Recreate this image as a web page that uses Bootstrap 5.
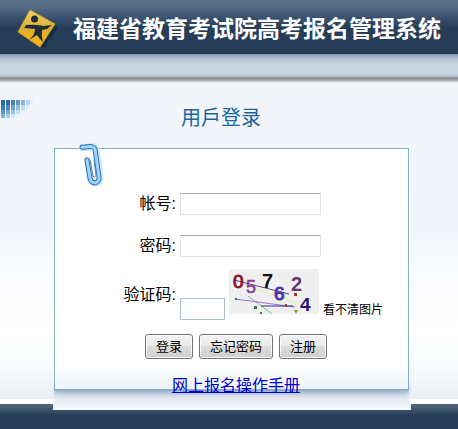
<!DOCTYPE html>
<html lang="zh-CN">
<head>
<meta charset="utf-8">
<meta name="viewport" content="width=device-width, initial-scale=1">
<title>福建省教育考试院高考报名管理系统</title>
<link href="https://cdn.jsdelivr.net/npm/bootstrap@5.3.0/dist/css/bootstrap.min.css" rel="stylesheet">
<style>
body{font-family:"Liberation Sans","Noto Sans CJK SC",sans-serif;font-size:16px;line-height:24px;color:#000;background:#253c56;}
.site-head{height:54px;padding-left:15px;background:linear-gradient(#5b7089 0,#546983 8px,#3d5570 16px,#263d58 28px,#253c57 100%);}
.site-head h1{font-family:"Noto Sans CJK SC",sans-serif;font-size:23px;line-height:30px;font-weight:700;color:#fff;}
.sub-band{height:29px;background:linear-gradient(#8095af 0,#a4b4c6 3px,#bdcad8 7px,#c8d5e2 11px,#c6d4e0 19px,#bccbd9 22px,#9fadb9 23px,#858a91 24px,#a5a6a9 26px,#d8d9dd 28px,#f3f4f8 29px);}
.page-body{background:linear-gradient(#f3f4fa 0,#f3f5fb 45%,#fbfcfe 62%,#fff 78%,#f8fbfc 88%,#e9eff1 316px,#fff 316px);}
.pixels{left:0;top:17px;}
.form-title{font-family:"Noto Sans CJK JP","Noto Sans CJK SC",sans-serif;font-size:20px;line-height:24px;color:#1b669b;padding-top:22px;padding-bottom:19px;padding-right:16px;}
.login-sheet{margin:0 47px -6px 53px;z-index:1;background:linear-gradient(#f3f5fb 0,#fff 70%,#f1f5f8 88%,#dfe6ee 92%,#ebeef4 97%,#f7f9fb 100%);}
.paper{inset:0 2px 19px 1px;border:1px solid #82b1cd;border-bottom:2px solid #8eabce;background:linear-gradient(#fff 0,#fff 90%,#edf4fa 100%);box-shadow:0 3px 5px #a1b2ce;clip-path:inset(0 0 -10px 0);}
.clip{left:26px;top:-5px;}
.login-form{padding:45px 0 12px 1px;}
.lbl{width:122px;text-align:right;}
.field{height:22px;border:1px solid #dfe3e7;border-top-color:#a9abb1;border-radius:1px;padding:0 3px;font-size:14px;}
.wide{width:141px;}
.code{width:45px;border-color:#b0bdcc;border-radius:0;}
.mb-row{margin-bottom:20px;}
.mb-code{margin-bottom:12px;}
.cap-img{margin-bottom:6px;}
.cap-link{font-size:12px;line-height:16px;color:#000;padding-bottom:2px;}
.act{height:25px;border:1px solid #747474;border-radius:3px;padding:0 10px;font-size:13px;line-height:21px;color:#000;background:linear-gradient(#f3f3f3 0,#ebebeb 50%,#dbdbdb 50%,#cfcfcf 100%);box-shadow:inset 0 0 0 1px #fafafa;}
.acts{gap:6px;padding:14px 0 15px 91px;}
.manual{margin-left:118px;color:#00c;}
.site-foot{height:25px;background:linear-gradient(#53697f 0,#3c536d 6px,#263d57 12px,#253c56 100%);}
</style>
</head>
<body>
<header class="site-head d-flex align-items-center">
<svg width="42" height="42" viewBox="0 0 42 42" aria-hidden="true">
<defs><linearGradient id="gold" x1="0" y1="0" x2="0" y2="1"><stop offset="0" stop-color="#eed477"/><stop offset=".5" stop-color="#dfac2f"/><stop offset="1" stop-color="#ffb50b"/></linearGradient></defs>
<path d="M18 7 43 21 29 42 8 31Z" fill="#101c2b" opacity=".5"/>
<path d="M15 4 40 18 25 41 3 26Z" fill="url(#gold)" stroke="#c7a02c" stroke-width="1" stroke-linejoin="round"/>
<circle cx="19.500" cy="13" r="3.500" fill="#202c3b"/>
<path d="M11 19Q20 18 29 20L37 19 32 23 27 24Q26 30 28 36L25 33 22 29 14 34Q20 29 20 23L9 22Z" fill="#202c3b"/>
</svg>
<h1 class="mb-0 ms-3 text-nowrap">福建省教育考试院高考报名管理系统</h1>
</header>
<div class="sub-band"></div>
<main class="page-body position-relative d-flex flex-column">
<svg class="pixels position-absolute" width="34" height="18" aria-hidden="true">
<g fill="#2e6ba8"><path d="M1 0h4v5H1zM6 0h4v5H6z"/><path d="M11 0h4v5h-4z" fill="#4583ba"/><path d="M16 0h4v5h-4z" fill="#6098c8"/><path d="M21 0h4v5h-4z" fill="#83b2db"/><path d="M26 0h4v5h-4z" fill="#b7d9ef"/><path d="M31 0h2v5h-2z" fill="#e2eff9"/></g>
<path d="M1 5h4v5H1z" fill="#3d79b2"/><path d="M6 5h4v5H6z" fill="#4e87bb"/><path d="M11 5h4v5h-4z" fill="#6ba0ca"/><path d="M16 5h4v5h-4z" fill="#93bedf"/><path d="M21 5h4v5h-4z" fill="#bddbf0"/><path d="M26 5h4v4h-4z" fill="#deedf8"/>
<path d="M1 10h4v4H1z" fill="#5d97c6"/><path d="M6 10h4v4H6z" fill="#75aad2"/><path d="M11 10h4v4h-4z" fill="#99c4e3"/><path d="M16 10h4v4h-4z" fill="#c3dff1"/><path d="M21 10h4v4h-4z" fill="#e1eff8"/>
<path d="M1 14h4v4H1z" fill="#82b0d5"/><path d="M6 14h4v4H6z" fill="#a9cce7"/><path d="M11 14h4v4h-4z" fill="#cde3f3"/>
</svg>
<h2 class="form-title text-center fw-normal mb-0">用戶登录</h2>
<section class="login-sheet position-relative">
<div class="paper position-absolute"></div>
<svg class="clip position-absolute" width="28" height="48" viewBox="0 0 28 48" fill="none" stroke-linecap="round" stroke-linejoin="round" aria-hidden="true">
<path d="M4 5C8 5 14 1 17 6L21 34C22 42 12 42 11 36L9 18" stroke="#cde8fb" stroke-width="7"/>
<path d="M3 4C8 5 13 1 16 6L20 34C21 41 12 42 11 35L8 17" stroke="#2f6fb5" stroke-width="5"/>
<path d="M3 4C8 5 13 1 16 6L20 34C21 41 12 42 11 35L8 17" stroke="#a0d4f6" stroke-width="3"/>
<path d="M11 17 14 33Q16 36 17 32L15 17" stroke="#4f87c0" stroke-width="1"/>
</svg>
<form class="login-form position-relative">
<div class="d-flex align-items-center gap-1 mb-row">
<label class="lbl lh-1" for="account">帐号:</label>
<input class="field wide" id="account" type="text">
</div>
<div class="d-flex align-items-center gap-1 mb-code">
<label class="lbl lh-1" for="password">密码:</label>
<input class="field wide" id="password" type="password">
</div>
<div class="d-flex align-items-center gap-1">
<label class="lbl" for="code">验证码:</label>
<input class="field code align-self-end" id="code" type="text">
<div class="d-flex align-items-end gap-1">
<svg class="cap-img" width="90" height="45" viewBox="0 0 90 45" role="img" aria-label="验证码" font-family="Liberation Sans,sans-serif" font-weight="bold">
<path d="M0 0h90v45H0z" fill="#f0eff0"/>
<path d="M25 19 73 36" stroke="#e4f29b"/><path d="M19 27 43 45" stroke="#88b58b"/><path d="M6 30 66 38" stroke="#9a72dc"/><path d="M5 11 60 25" stroke="#66417f"/><path d="M32 37h32" stroke="#29298a"/>
<text x="4" y="19" font-size="19" fill="#8c1830" font-weight="normal" stroke="#8c1830">0</text>
<text x="17" y="24" font-size="18" fill="#8a3a91" font-weight="normal" stroke="#8a3a91" stroke-width=".5">5</text>
<text x="33" y="19" font-size="20" fill="#17101d">7</text>
<text x="45" y="31" font-size="19" fill="#4933aa" font-weight="normal" stroke="#4933aa">6</text>
<text x="62" y="22" font-size="20" fill="#65396f">2</text>
<text x="71" y="42" font-size="19" fill="#2d127b">4</text>
<g fill="#9d3b35"><path d="M65 24h3v3h-3zM56 35h2v3h-2z"/><path d="M65 41h4l-2 4z" fill="#899b28"/><path d="M25 37h3v3h-3zM6 29h2v2H6zM31 43h2v2h-2z" fill="#33764d"/></g>
</svg>
<a class="cap-link text-decoration-none text-nowrap" href="#">看不清图片</a>
</div>
</div>
<div class="acts d-flex">
<button class="act" type="submit">登录</button>
<button class="act" type="button">忘记密码</button>
<button class="act" type="button">注册</button>
</div>
<a class="manual d-block" href="#">网上报名操作手册</a>
</form>
</section>
</main>
<footer class="site-foot"></footer>
<script src="https://cdn.jsdelivr.net/npm/bootstrap@5.3.0/dist/js/bootstrap.bundle.min.js"></script>
</body>
</html>
